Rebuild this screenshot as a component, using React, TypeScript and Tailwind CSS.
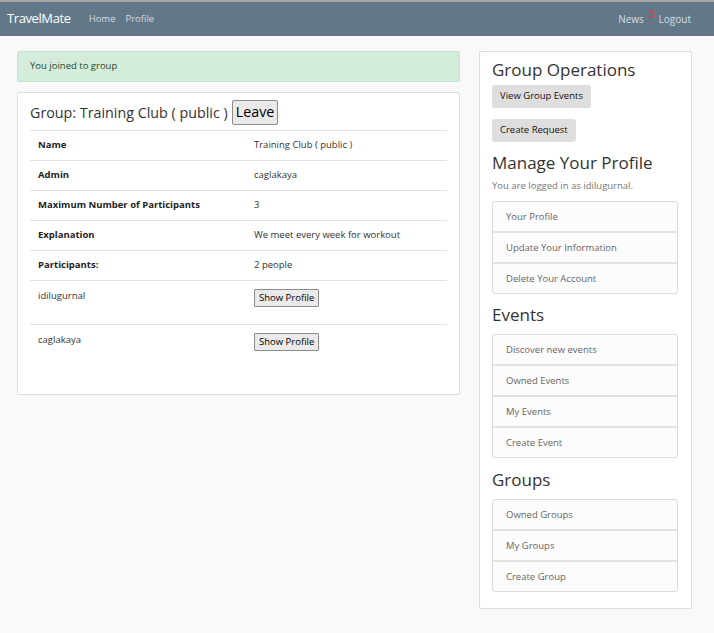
import React from 'react';

const rows = [
  { label: 'Name', value: 'Training Club ( public )' },
  { label: 'Admin', value: 'caglakaya' },
  { label: 'Maximum Number of Participants', value: '3' },
  { label: 'Explanation', value: 'We meet every week for workout' },
  { label: 'Participants:', value: '2 people' },
];

const participants = ['idilugurnal', 'caglakaya'];

const ListGroup = ({ items }: { items: string[] }) => (
  <div className="border border-[#dcdcdc] rounded-[3px] bg-[#fcfcfc]">
    {items.map((item, i) => (
      <div
        key={item}
        className={
          'flex items-center px-[13px] text-[9.5px] text-[#666] ' +
          (i > 0 ? 'h-[31px] border-t-2 border-[#e2e2e2]' : 'h-[29px]')
        }
      >
        {item}
      </div>
    ))}
  </div>
);

export default function App() {
  return (
    <div className="min-h-[633px] bg-[#f9f9f9] text-[#333]" style={{ fontFamily: '"Open Sans", "Noto Sans", sans-serif' }}>
      {/* Navbar */}
      <div className="h-[36px] bg-[#627888] border-t-[2px] border-[#a8a8a8] flex items-center px-[7px]">
        <span className="text-white text-[13px] tracking-[-0.4px]">TravelMate</span>
        <div className="flex gap-[10px] ml-[18px] text-[9.5px] text-[#d4dde4]">
          <span>Home</span>
          <span>Profile</span>
        </div>
        <div className="ml-auto flex items-center text-[10px] text-[#d4dde4] pr-[16px]">
          <span>News</span>
          <span className="text-[#ff2a2a] text-[10px] leading-none relative -top-[5px] ml-[5px] mr-[4px]">3</span>
          <span>Logout</span>
        </div>
      </div>

      <div className="flex gap-[19px] pl-[17px] pt-[15px]">
        {/* Main */}
        <div className="w-[443px] flex flex-col gap-[10px]">
          <div className="h-[31px] bg-[#d4ecdc] border border-[#c4e3cd] rounded-[2px] flex items-center px-[12px] text-[9.5px] text-[#1f4a2a]">
            You joined to group
          </div>
          <div className="h-[303px] bg-white border border-[#dcdcdc] rounded-[2px] px-[12px]">
            <div className="h-[38px] flex items-center gap-[4px] border-b border-[#e0e0e0] pt-[2px]">
              <span className="text-[14.3px] text-[#333]">Group: Training Club ( public )</span>
              <button className="h-[25px] px-[3px] text-[14.3px] text-black bg-[#eaeaea] border border-[#8c8c8c] rounded-[2px] leading-none">
                Leave
              </button>
            </div>
            {rows.map(r => (
              <div key={r.label} className="h-[30px] grid grid-cols-[216px_1fr] items-center px-[8px] border-b border-[#e0e0e6] text-[9.5px]">
                <span className="font-bold text-[#222]">{r.label}</span>
                <span className="text-[#333]">{r.value}</span>
              </div>
            ))}
            {participants.map((p, i) => (
              <div
                key={p}
                className={'h-[44px] grid grid-cols-[216px_1fr] items-start pt-[8px] px-[8px] text-[9.5px] ' + (i === 0 ? 'border-b border-[#e0e0e6]' : '')}
              >
                <span className="text-[#333]">{p}</span>
                <div>
                  <button className="h-[18px] px-[4px] text-[9.5px] text-black bg-[#eaeaea] border border-[#8c8c8c] rounded-[1px] leading-none">
                    Show Profile
                  </button>
                </div>
              </div>
            ))}
          </div>
        </div>

        {/* Sidebar */}
        <div className="w-[213px] h-[558px] bg-white border border-[#dcdcdc] rounded-[2px] pl-[12px] pr-[13px] pt-[6px]">
          <div className="text-[17px] text-[#333] leading-[24px]">Group Operations</div>
          <div className="flex flex-col items-start gap-[11px] mt-[3px]">
            <button className="h-[23px] px-[8px] bg-[#dedede] rounded-[3px] text-[9.5px] text-[#111]">View Group Events</button>
            <button className="h-[23px] px-[8px] bg-[#dedede] rounded-[3px] text-[9.5px] text-[#111]">Create Request</button>
          </div>
          <div className="text-[17px] text-[#333] leading-[24px] mt-[9px]">Manage Your Profile</div>
          <div className="text-[9.5px] text-[#777] mt-[4px]">You are logged in as idilugurnal.</div>
          <div className="mt-[8px]">
            <ListGroup items={['Your Profile', 'Update Your Information', 'Delete Your Account']} />
          </div>
          <div className="text-[17px] text-[#333] leading-[24px] mt-[9px]">Events</div>
          <div className="mt-[7px]">
            <ListGroup items={['Discover new events', 'Owned Events', 'My Events', 'Create Event']} />
          </div>
          <div className="text-[17px] text-[#333] leading-[24px] mt-[10px]">Groups</div>
          <div className="mt-[7px]">
            <ListGroup items={['Owned Groups', 'My Groups', 'Create Group']} />
          </div>
        </div>
      </div>
    </div>
  );
}
